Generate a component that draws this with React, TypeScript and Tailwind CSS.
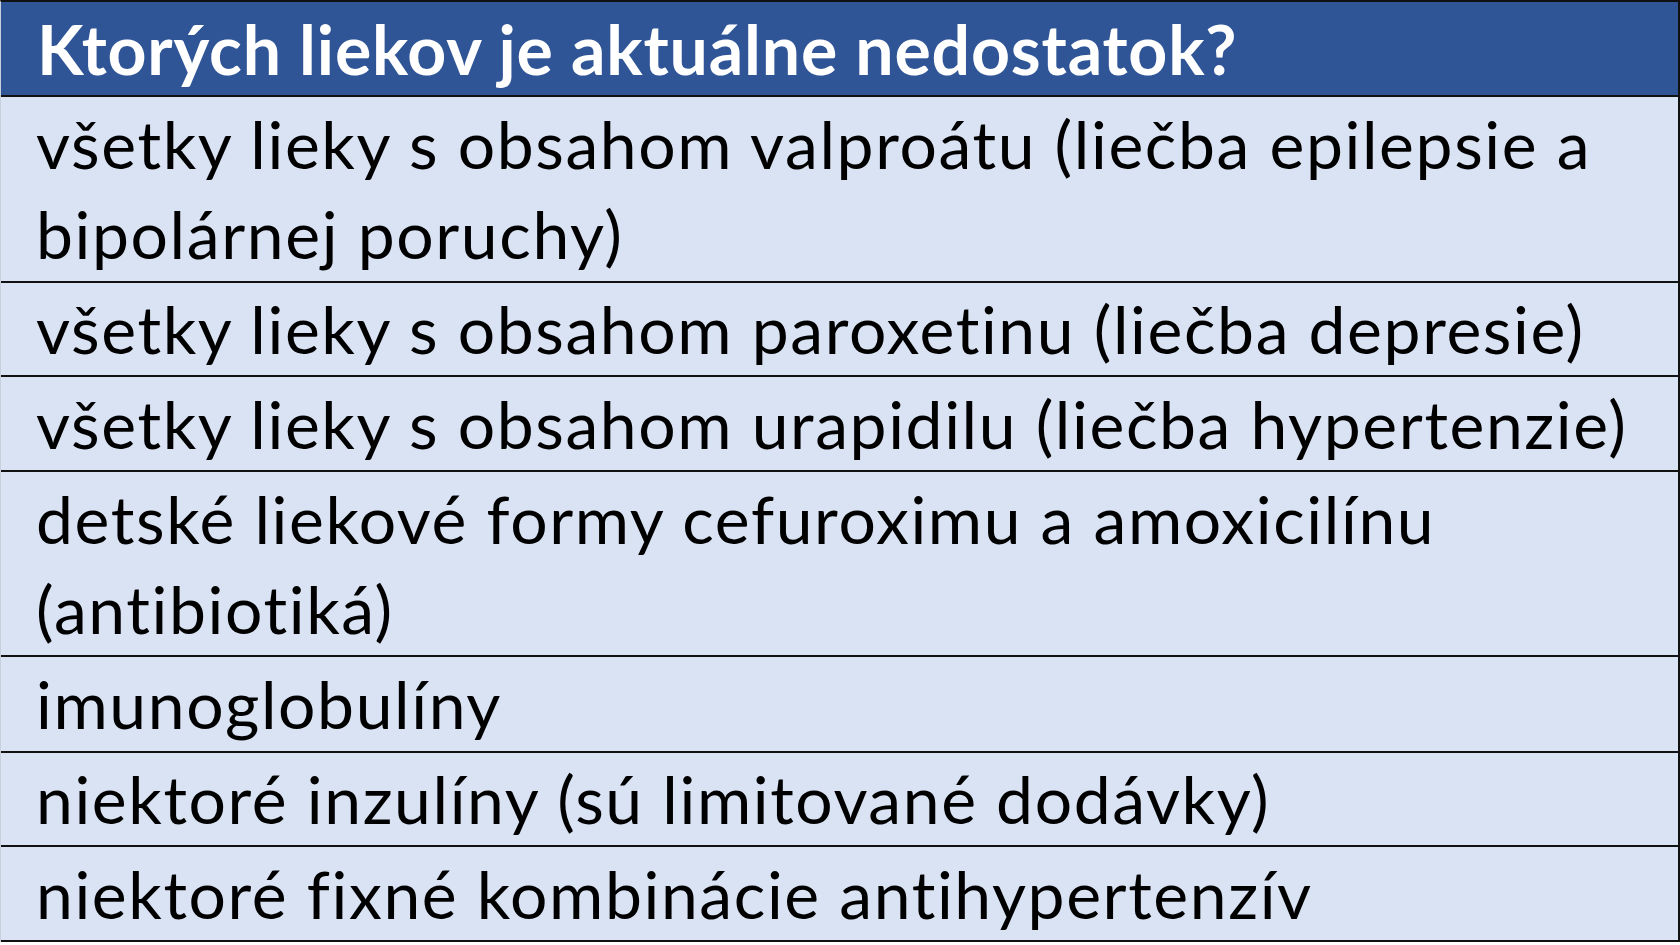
const rows: { text: string; h: string }[] = [
  { text: 'všetky lieky s obsahom valproátu (liečba epilepsie a bipolárnej poruchy)', h: 'h-[186px]' },
  { text: 'všetky lieky s obsahom paroxetinu (liečba depresie)', h: 'h-[94px]' },
  { text: 'všetky lieky s obsahom urapidilu (liečba hypertenzie)', h: 'h-[95px]' },
  { text: 'detské liekové formy cefuroximu a amoxicilínu (antibiotiká)', h: 'h-[185px]' },
  { text: 'imunoglobulíny', h: 'h-[96px]' },
  { text: 'niektoré inzulíny (sú limitované dodávky)', h: 'h-[94px]' },
  { text: 'niektoré fixné kombinácie antihypertenzív', h: 'h-[95px]' },
];

export default function App() {
  return (
    <div className="w-[1680px] h-[945px] bg-white overflow-hidden font-['Lato',sans-serif]">
      <div className="w-[1680px] border-t-2 border-r-2 border-[#111] border-l border-l-[#c9d0dc]">
        <div className="h-[95px] flex items-center bg-[#2f5597] border-b-2 border-[#111] pl-[36px]">
          <h1 className="text-[68px] font-bold text-white leading-none tracking-[0.8px]">
            Ktorých liekov je aktuálne nedostatok?
          </h1>
        </div>
        {rows.map((r) => (
          <div
            key={r.text}
            className={`${r.h} flex items-center bg-[#dae3f3] border-b-2 border-[#111] pl-[35px] pr-[40px]`}
          >
            <p className="text-[66px] leading-[90px] text-black tracking-[1.6px]">{r.text}</p>
          </div>
        ))}
      </div>
    </div>
  );
}
